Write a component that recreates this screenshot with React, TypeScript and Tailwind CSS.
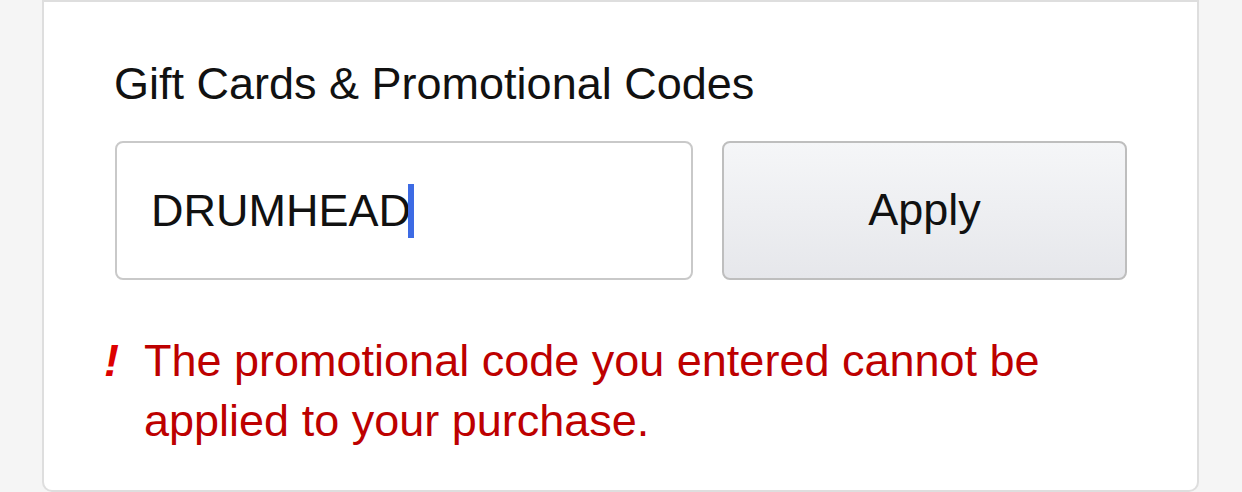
export default function App() {
  return (
    <div className="w-[1242px] h-[492px] bg-[#f5f5f5] overflow-hidden font-['Liberation_Sans',Arial,sans-serif]">
      <div className="ml-[42px] w-[1157px] h-[492px] bg-white border-2 border-[#dedede] rounded-b-[10px] pl-[71px] pr-[70px] pt-[56px]">
        {/* Heading */}
        <h2 className="text-[45px] leading-[52px] text-[#111] -ml-[1px]">Gift Cards &amp; Promotional Codes</h2>

        {/* Code input + apply */}
        <div className="mt-[31px] flex gap-[29px] h-[139px]">
          <div className="w-[578px] h-full border-2 border-[#c9c9c9] rounded-[8px] flex items-center pl-[34px]">
            <span className="text-[45px] leading-none text-[#111]">DRUMHEAD</span>
            <span className="inline-block -ml-[3px] w-[6px] h-[54px] bg-[#3d6be4]" />
          </div>
          <button className="flex-1 h-full pb-[2px] border-2 border-[#bebebe] rounded-[8px] bg-gradient-to-b from-[#f5f6f8] to-[#e6e7eb] text-[45px] text-[#111]">
            Apply
          </button>
        </div>

        {/* Error message */}
        <div className="mt-[51px] flex -ml-[15px]">
          <span className="w-[44px] shrink-0 pl-[4px] text-[45px] leading-[60px] font-bold italic text-[#dd0000]">!</span>
          <p className="text-[45px] leading-[60px] text-[#bd0000]">
            The promotional code you entered cannot be applied to your purchase.
          </p>
        </div>
      </div>
    </div>
  );
}
